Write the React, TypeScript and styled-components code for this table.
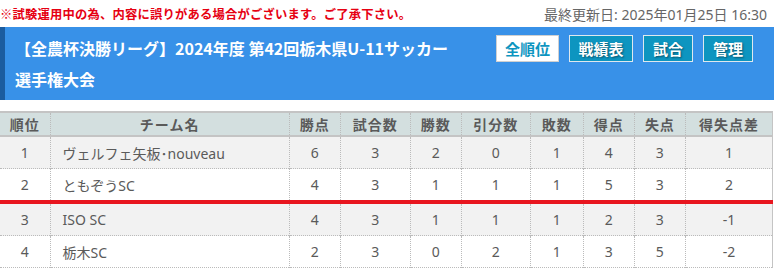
import React from "react";
import styled, { createGlobalStyle } from "styled-components";

const colors = {
    notice: "#e60012",
    muted: "#666",
    band: "#3891e8",
    bandEdge: "#1b5c9f",
    teal: "#0d95c0",
    headBg: "#d3dfdf",
    stripe: "#f2f2f2",
    text: "#5a5a5a",
    rule: "#c4c4c4",
    cut: "#e8161f",
};

const GlobalStyle = createGlobalStyle`
    body {
        margin: 0;
        background: #fff;
        font-family: "Noto Sans", "Noto Sans CJK JP", sans-serif;
    }
`;

const Page = styled.div`
    width: 774px;
`;

const TopBar = styled.div`
    height: 27px;
    display: flex;
    align-items: center;
    justify-content: space-between;
    padding-right: 7px;
`;

const Notice = styled.span`
    color: ${colors.notice};
    font-family: "Noto Sans CJK JP", sans-serif;
    font-weight: bold;
    font-size: 12.3px;
    letter-spacing: 0.2px;
`;

const Updated = styled.span`
    color: ${colors.muted};
    font-size: 14px;
`;

const Band = styled.header`
    display: flex;
    align-items: flex-start;
    background: ${colors.band};
    border-left: 5px solid ${colors.bandEdge};
    padding: 6px 21px 5px 10px;
`;

const Title = styled.h1`
    flex: 1;
    margin: 0 40px 0 0;
    color: #fff;
    font-family: "Noto Sans CJK JP", sans-serif;
    font-size: 16px;
    font-weight: bold;
    line-height: 31px;
`;

const Nav = styled.nav`
    display: flex;
    gap: 10px;
    margin-top: 2px;
`;

const NavButton = styled.button<{ $active?: boolean; $w: number }>`
    height: 27px;
    padding: 0;
    width: ${(p) => p.$w}px;
    border: 1px solid ${(p) => (p.$active ? "#d0d0d0" : "#dfe8ee")};
    background: ${(p) => (p.$active ? "#fff" : colors.teal)};
    color: ${(p) => (p.$active ? colors.teal : "#fff")};
    text-shadow: ${(p) => (p.$active ? "none" : "1px 1px 2px rgba(0,0,0,0.45)")};
    font-family: "Noto Sans CJK JP", sans-serif;
    font-size: 15px;
    font-weight: bold;
    cursor: pointer;
`;

const Table = styled.table`
    margin-top: 11px;
    width: 773px;
    border-collapse: collapse;
    table-layout: fixed;
    border-top: 2px solid ${colors.rule};
    border-right: 1px solid ${colors.rule};
    color: ${colors.text};
    font-family: "Noto Sans", "Noto Sans CJK JP", sans-serif;
    font-size: 14px;
`;

const Th = styled.th`
    height: 22px;
    padding: 0;
    background: ${colors.headBg};
    border-bottom: 2px solid ${colors.rule};
    border-left: 1px dotted #bbb;
    font-family: "Noto Sans CJK JP", sans-serif;
    font-weight: bold;
    font-size: 14px;
    letter-spacing: 1px;
    &:first-child {
        border-left: none;
    }
`;

const Row = styled.tr<{ $odd: boolean; $cut?: boolean }>`
    background: ${(p) => (p.$odd ? colors.stripe : "#fff")};
    border-bottom: ${(p) => (p.$cut ? `4px solid ${colors.cut}` : "1px dotted #bbb")};
`;

const Td = styled.td<{ $left?: boolean }>`
    height: 31px;
    padding: ${(p) => (p.$left ? "0 0 0 12px" : "0")};
    text-align: ${(p) => (p.$left ? "left" : "center")};
    border-left: 1px dotted #bbb;
    &:first-child {
        border-left: none;
    }
`;

const columns = [
    { label: "順位", w: 50 },
    { label: "チーム名", w: 239 },
    { label: "勝点", w: 51 },
    { label: "試合数", w: 70 },
    { label: "勝数", w: 51 },
    { label: "引分数", w: 69 },
    { label: "敗数", w: 53 },
    { label: "得点", w: 51 },
    { label: "失点", w: 51 },
    { label: "得失点差", w: 87 },
];

const rows = [
    ["1", "ヴェルフェ矢板･nouveau", 6, 3, 2, 0, 1, 4, 3, 1],
    ["2", "ともぞうSC", 4, 3, 1, 1, 1, 5, 3, 2],
    ["3", "ISO SC", 4, 3, 1, 1, 1, 2, 3, -1],
    ["4", "栃木SC", 2, 3, 0, 2, 1, 3, 5, -2],
];

const navItems = [
    { label: "全順位", w: 63, active: true },
    { label: "戦績表", w: 64 },
    { label: "試合", w: 50 },
    { label: "管理", w: 50 },
];

const App: React.FC = () => {
    return (
        <Page>
            <GlobalStyle />
            <TopBar>
                <Notice>※試験運用中の為、内容に誤りがある場合がございます。ご了承下さい。</Notice>
                <Updated>最終更新日: 2025年01月25日 16:30</Updated>
            </TopBar>
            <Band>
                <Title>【全農杯決勝リーグ】2024年度 第42回栃木県U-11サッカー選手権大会</Title>
                <Nav>
                    {navItems.map((n) => (
                        <NavButton key={n.label} $active={n.active} $w={n.w}>
                            {n.label}
                        </NavButton>
                    ))}
                </Nav>
            </Band>
            <Table>
                <colgroup>
                    {columns.map((c) => (
                        <col key={c.label} style={{ width: c.w }} />
                    ))}
                </colgroup>
                <thead>
                    <tr>
                        {columns.map((c) => (
                            <Th key={c.label}>{c.label}</Th>
                        ))}
                    </tr>
                </thead>
                <tbody>
                    {rows.map((r, i) => (
                        <Row key={i} $odd={i % 2 === 0} $cut={i === 1}>
                            {r.map((v, j) => (
                                <Td key={j} $left={j === 1}>
                                    {v}
                                </Td>
                            ))}
                        </Row>
                    ))}
                </tbody>
            </Table>
        </Page>
    );
};

export default App;
